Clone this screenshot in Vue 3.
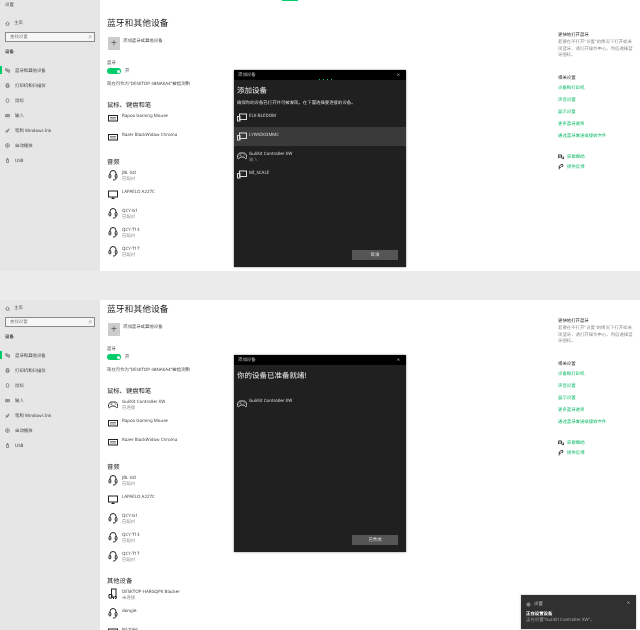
<script setup>
const nav = [
  { t: '蓝牙和其他设备', i: 'bt', on: true },
  { t: '打印机和扫描仪', i: 'print' },
  { t: '鼠标', i: 'mouse' },
  { t: '输入', i: 'kb' },
  { t: '笔和 Windows Ink', i: 'pen' },
  { t: '自动播放', i: 'play' },
  { t: 'USB', i: 'usb' }
]
const kb = (n) => ({ n, i: 'kb' })
const hs = (n, s = '已配对') => ({ n, s, i: 'hs' })
const audio = [hs('JBL GO'), { n: 'LAPAELO A227C', i: 'tv' }, hs('QCY-G1'), hs('QCY-T13'), hs('QCY-T17')]
const panels = [
  {
    key: 'a', cls: 'top', showTitle: true,
    groups: [
      { h: '鼠标、键盘和笔', items: [kb('Rapoo Gaming Mouse'), kb('Razer BlackWidow Chroma')] },
      { h: '音频', items: audio }
    ],
    dlg: {
      title: '添加设备', desc: '确保你的设备已打开并可被发现。在下面选择要连接的设备。', btn: '取消', progress: true,
      rows: [
        { n: 'ELK-BLEDOM', i: 'scr' },
        { n: 'LYWSD03MMC', i: 'scr', sel: true },
        { n: 'GuliKit Controller XW', s: '输入', i: 'pad' },
        { n: 'MI_SCALE', i: 'scr' }
      ]
    }
  },
  {
    key: 'b', cls: 'bottom', showTitle: false,
    groups: [
      { h: '鼠标、键盘和笔', items: [{ n: 'GuliKit Controller XW', s: '已连接', i: 'pad' }, kb('Rapoo Gaming Mouse'), kb('Razer BlackWidow Chroma')] },
      { h: '音频', items: audio },
      { h: '其他设备', items: [{ n: 'DESKTOP-HARGQPK Blacker', s: '未连接', i: 'phone' }, { n: 'dongle', i: 'hs' }, { n: 'NS2066', i: 'tv' }] }
    ],
    dlg: {
      title: '你的设备已准备就绪!', desc: '', btn: '已完成',
      rows: [{ n: 'GuliKit Controller XW', i: 'pad' }]
    }
  }
]
const links = ['设备和打印机', '声音设置', '显示设置', '更多蓝牙选项', '通过蓝牙发送或接收文件']
</script>

<template>
  <div class="page">
    <section v-for="p in panels" :key="p.key" class="panel" :class="p.cls">
      <aside class="side">
        <div v-if="p.showTitle" class="app-title">设置</div>
        <div class="home">
          <svg class="nav-ic" viewBox="0 0 10 10"><path d="M1 5 5 1.5 9 5M2.5 4v4.5h5V4" /></svg>
          <span>主页</span>
        </div>
        <div class="search"><span>查找设置</span><svg viewBox="0 0 10 10"><circle cx="6" cy="4" r="2.6" /><path d="M4 6 1.5 8.5" /></svg></div>
        <div class="side-h">设备</div>
        <div v-for="n in nav" :key="n.t" class="nav" :class="{ on: n.on }">
          <svg class="nav-ic" viewBox="0 0 10 10">
            <path v-if="n.i === 'bt'" d="M1 1.5h3.5v3H1zM2 6h4.5M6 3.5h3v5H6z" />
            <path v-else-if="n.i === 'print'" d="M3 3.5V1h4v2.5M1.5 7V4h7v3H7M3 6h4v3H3z" />
            <path v-else-if="n.i === 'mouse'" d="M5 1C3.300 1 2.500 2.200 2.500 4v2.500C2.500 8 3.500 9 5 9s2.500-1 2.500-2.500V4C7.500 2.200 6.700 1 5 1Z" />
            <path v-else-if="n.i === 'kb'" d="M1 3h8v4.500H1zM2.500 4.800h5M3 6.200h4" />
            <path v-else-if="n.i === 'pen'" d="M1.500 8.500 4 6l1.500 1.500-2 1zM4 6l3.500-4.500 1 1L5.500 7.500M1 5.500c1-1 2-1 2.500 0" />
            <path v-else-if="n.i === 'play'" d="M5 1a4 4 0 1 0 .01 0ZM4 3.200v3.600L7 5Z" />
            <path v-else d="M3 3.500h4V9H3zM4 3.500V1h2v2.500" />
          </svg>
          <span>{{ n.t }}</span>
        </div>
      </aside>

      <main class="main">
        <div class="content">
          <h1>蓝牙和其他设备</h1>
          <div class="add">
            <div class="plus">+</div>
            <span>添加蓝牙或其他设备</span>
          </div>
          <div class="bt-label">蓝牙</div>
          <div class="toggle-row"><i class="toggle"><b></b></i><span>开</span></div>
          <div class="disc">现在可作为"DESKTOP-38NAKA4"被检测到</div>
          <div v-for="g in p.groups" :key="g.h" class="group">
            <h2>{{ g.h }}</h2>
            <div v-for="d in g.items" :key="d.n" class="dev">
              <svg class="dev-ic" viewBox="0 0 10 12">
                <g v-if="d.i === 'hs'"><path d="M2 6V4.500a3 3 0 0 1 6 0V6" /><rect x="1" y="5.500" width="1.800" height="3.500" rx=".9" /><rect x="7.200" y="5.500" width="1.800" height="3.500" rx=".9" /><path d="M8 9c0 1.500-1 2-3 2" /></g>
                <g v-else-if="d.i === 'kb'"><rect x=".5" y="3.500" width="9" height="5.500" /><path class="thin" d="M2 5.500h6M2 7h6" /></g>
                <g v-else-if="d.i === 'tv'"><rect x=".5" y="3" width="9" height="6" /><path d="M3.500 10.500h3M5 9v1.500" /></g>
                <g v-else-if="d.i === 'pad'" transform="translate(0 .5) scale(.85 1)"><path d="M3.500 3.500h5C10.300 3.500 11.500 6 11.500 8c0 1.500-1.500 1.500-2.500.5L8 7.500H4L3 8.500c-1 1-2.500 1-2.500-.5 0-2 1.200-4.500 3-4.500Z" /><path d="M3 5.500h2M8 5.500h1" /></g>
                <g v-else><rect x="3.500" y="1" width="4.500" height="8" /><path d="M1 6.500h3v3.500H1zM5.500 9v2M7 8l2 1.500L7 11" /></g>
              </svg>
              <div class="dev-txt">
                <div>{{ d.n }}</div>
                <div v-if="d.s" class="sub">{{ d.s }}</div>
              </div>
            </div>
          </div>
        </div>

        <div class="aside">
          <div class="a-h">更快地打开蓝牙</div>
          <p>若要在不打开"设置"的情况下打开或关闭蓝牙，请打开操作中心，然后选择蓝牙图标。</p>
          <div class="a-h rel">相关设置</div>
          <a v-for="l in links" :key="l">{{ l }}</a>
          <div class="help first">
            <svg viewBox="0 0 10 10"><path d="M1 1.500h5v3.500H3L1 6.500ZM5 6.500h2l2 2V4" /></svg><a>获取帮助</a>
          </div>
          <div class="help">
            <svg viewBox="0 0 10 10"><path d="M2 9V3.500L5 1h3v3H5.500M2 5.500h3" /></svg><a>提供反馈</a>
          </div>
        </div>
      </main>

      <div class="dialog">
        <div class="d-bar"><span>添加设备</span><span class="x">✕</span></div>
        <div class="d-progress"><i v-if="p.dlg.progress"></i></div>
        <div class="d-body">
          <div class="d-title">{{ p.dlg.title }}</div>
          <div class="d-desc">{{ p.dlg.desc }}</div>
          <div class="d-list">
            <div v-for="r in p.dlg.rows" :key="r.n" class="d-row" :class="{ sel: r.sel }">
              <svg class="dev-ic" viewBox="0 0 10 12">
                <g v-if="r.i === 'scr'"><rect x="2.500" y="3" width="7" height="5.500" /><rect x=".5" y="5.500" width="2.500" height="4.500" /></g>
                <g v-else transform="translate(0 .5) scale(.85 1)"><path d="M3.500 3.500h5C10.300 3.500 11.500 6 11.500 8c0 1.500-1.500 1.500-2.500.5L8 7.500H4L3 8.500c-1 1-2.500 1-2.500-.5 0-2 1.200-4.500 3-4.500Z" /><path d="M3 5.500h2M8 5.500h1" /></g>
              </svg>
              <div class="dev-txt"><div>{{ r.n }}</div><div v-if="r.s" class="sub">{{ r.s }}</div></div>
            </div>
          </div>
          <div class="d-foot"><div class="d-btn">{{ p.dlg.btn }}</div></div>
        </div>
      </div>

      <div v-if="p.key === 'b'" class="toast">
        <div class="t-h"><svg viewBox="0 0 10 10"><circle cx="5" cy="5" r="3.200" /><circle cx="5" cy="5" r="1" /></svg><span>设置</span><span class="t-x">✕</span></div>
        <div class="t-b">正在设置设备</div>
        <div class="t-s">正在设置"GuliKit Controller XW"。</div>
      </div>
    </section>
    <i class="top-bar"></i>
  </div>
</template>

<style>
html, body { margin: 0; background: #ebebeb; }
</style>

<style scoped>
.page {
  position: relative;
  width: 640px;
  height: 630px;
  overflow: hidden;
  background: #ebebeb;
  font-family: "Noto Sans", "Noto Sans CJK SC", sans-serif;
  color: #444;
  font-size: 4.4px;
  text-rendering: geometricPrecision;
  filter: blur(0.3px);
}
.panel {
  position: relative;
  display: flex;
  overflow: hidden;
  background: #fff;
}
.panel.top { height: 271px; margin-bottom: 29px; }
.panel.bottom { height: 330px; }

.side { width: 100px; flex: none; background: #e6e6e6; line-height: 6px; }
.app-title { height: 10px; padding: 2px 0 0 5px; box-sizing: border-box; }
.home { display: flex; align-items: center; gap: 4px; height: 10px; padding-left: 5px; }
.top .home { margin-top: 8px; }
.bottom .home { margin-top: 3px; }
.nav-ic { width: 5px; height: 5px; flex: none; fill: none; stroke: #444; stroke-width: 1; }
.search {
  display: flex; align-items: center; justify-content: space-between;
  box-sizing: border-box;
  width: 90px; height: 10px; margin: 4px 0 0 5px; padding: 0 2px 0 4px;
  background: #f6f6f6; border: 1px solid #8a8a8a; color: #777;
}
.search svg { width: 4px; height: 4px; fill: none; stroke: #777; stroke-width: 1; }
.side-h { margin: 7px 0 0 5px; height: 6px; font-weight: 700; }
.nav { position: relative; display: flex; align-items: center; gap: 5px; height: 15px; padding-left: 5px; }
.side-h + .nav { margin-top: 8px; }
.nav.on::before { content: ""; position: absolute; left: 0; top: 2.5px; width: 1.5px; height: 8px; background: #00cc6a; }

.main { flex: 1; display: flex; min-width: 0; }
.content { width: 458px; flex: none; padding-left: 7px; box-sizing: border-box; }
.top .content { padding-top: 16.5px; }
.bottom .content { padding-top: 2.5px; }
h1 { margin: 0; font-size: 8.8px; line-height: 12px; font-weight: 400; color: #222; }
.add { display: flex; align-items: flex-start; gap: 3px; margin: 8.5px 0 0 1px; height: 13px; line-height: 6px; }
.add span { padding-top: 1px; }
.plus {
  width: 12px; height: 13px; background: #ccc; color: #555;
  font: 10px/13px "Liberation Sans", sans-serif; text-align: center;
}
.bt-label { margin: 10px 0 0; line-height: 6px; }
.toggle-row { display: flex; align-items: center; gap: 4px; margin-top: 1.5px; height: 7px; }
.toggle { display: block; position: relative; width: 14px; height: 6px; border-radius: 3px; background: #00cc6a; }
.toggle b { position: absolute; right: 1.500px; top: 1.500px; width: 3px; height: 3px; border-radius: 50%; background: #fff; }
.disc { margin-top: 6.5px; line-height: 6px; }
.group { margin-bottom: 6.5px; }
.disc + .group { margin-top: 12.5px; }
h2 { margin: 0 0 3.5px; font-size: 6.3px; line-height: 9px; font-weight: 400; color: #222; }
.dev { display: flex; gap: 4px; height: 19px; padding-left: 1px; line-height: 6px; }
.dev-ic { width: 10px; height: 12px; flex: none; margin-top: -0.5px; fill: none; stroke: #222; stroke-width: 1; }
.thin { stroke-width: .8; stroke: #666; }
.dev-txt { white-space: nowrap; padding-top: .7px; }
.sub { color: #8a8a8a; }

.aside { width: 75px; padding: 32px 0 0 0; line-height: 6.300px; flex: none; }
.bottom .aside { padding-top: 18px; }
.a-h { color: #222; }
.aside p { margin: 1px 0 0; color: #8a8a8a; width: 76px; }
.rel { margin-top: 16.6px; }
.aside a { display: block; color: #00b85f; margin-top: 5.8px; }
.rel + a { margin-top: 4px; }
.help { display: flex; gap: 3px; align-items: center; }
.help.first { margin-top: 14.6px; }
.help + .help { margin-top: 3.7px; }
.help a { margin-top: 0; }
.help svg { width: 6px; height: 6px; fill: none; stroke: #111; stroke-width: 1.300; }

.dialog {
  position: absolute; left: 234px; width: 172px;
  display: flex; flex-direction: column;
  background: #202020; color: #ddd;
  box-shadow: 0 0 2px rgba(0,0,0,.5);
}
.top .dialog { top: 70px; height: 197px; }
.bottom .dialog { top: 55px; height: 197px; }
.d-bar {
  display: flex; justify-content: space-between; align-items: center;
  height: 10px; padding: 0 6px 0 4px; background: #000; color: #ccc; flex: none;
}
.x { font-size: 4px; }
.d-progress { height: 1px; flex: none; position: relative; }
.d-progress i { display: block; position: absolute; left: 85px; top: -1px; width: 16px; height: 1px; background: repeating-linear-gradient(90deg, #00cc6a 0 1.500px, transparent 1.500px 4px); }
.d-body { flex: 1; display: flex; flex-direction: column; padding: 0 0 7px; min-height: 0; }
.d-title { margin: 4.5px 0 0 3px; font-size: 7.500px; line-height: 10px; color: #eee; }
.bottom .d-title { margin-top: 5px; }
.d-desc { margin: 3px 0 0 3px; height: 8px; line-height: 8px; }
.d-list { margin-top: 1.5px; }
.d-row { display: flex; gap: 2px; box-sizing: border-box; height: 19px; padding: 4px 0 0 3px; line-height: 6px; }
.d-row .dev-ic { stroke: #ddd; margin-top: -1px; }
.d-row.sel { background: #3a3a3a; }
.d-foot { margin-top: auto; display: flex; justify-content: flex-end; padding-right: 8px; }
.d-btn { width: 46px; height: 10px; background: #555; color: #ddd; text-align: center; line-height: 10px; }

.toast {
  position: absolute; right: 4px; bottom: 1px; width: 115px; height: 34px;
  box-sizing: border-box; padding: 6px 6px 0 5px;
  background: #303030; color: #ccc; line-height: 6px;
  box-shadow: 0 0 2px rgba(0,0,0,.3);
}
.t-h { display: flex; align-items: center; gap: 3px; }
.t-h svg { width: 5px; height: 5px; fill: none; stroke: #ddd; stroke-width: 1.200; }
.t-x { margin-left: auto; font-size: 4px; }
.t-b { margin-top: 4px; color: #fff; font-weight: 700; }
.t-s { color: #aaa; }
.top-bar { position: absolute; left: 282px; top: 0; width: 16px; height: 1px; background: #00cc6a; }
</style>
